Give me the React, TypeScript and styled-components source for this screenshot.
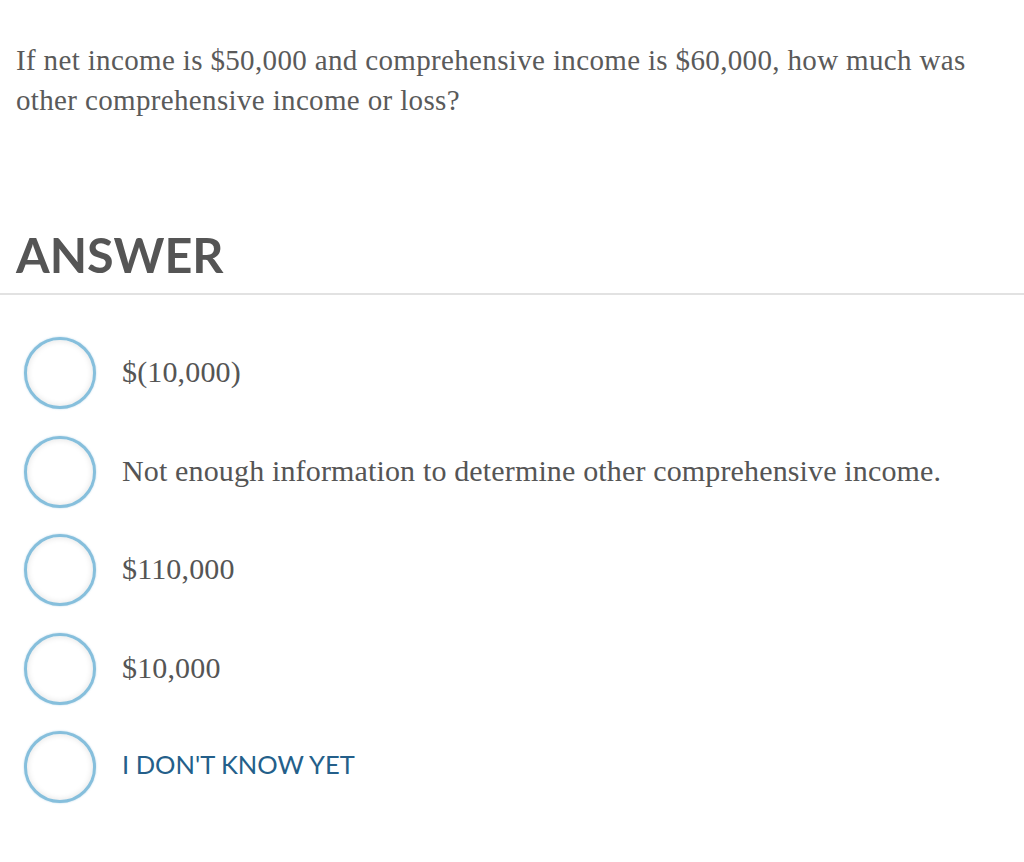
import React from 'react';
import styled, { createGlobalStyle } from 'styled-components';

const GlobalStyle = createGlobalStyle`
  body {
    margin: 0;
    background: #fff;
  }
`;

const Page = styled.div`
  width: 1024px;
  height: 862px;
  overflow: hidden;
  background: #fff;
`;

const Question = styled.p`
  margin: 0;
  padding: 40px 16px 0 16px;
  font-family: 'Liberation Serif', 'DejaVu Serif', serif;
  font-size: 29px;
  letter-spacing: 0.35px;
  line-height: 40px;
  color: #5a5a5a;
  white-space: nowrap;
`;

const Heading = styled.h2`
  margin: 105px 0 0 0;
  padding: 0 16px 10px 16px;
  font-family: Lato, 'Liberation Sans', sans-serif;
  font-weight: 700;
  font-size: 48.5px;
  line-height: 58px;
  color: #555;
  border-bottom: 2px solid #e2e2e2;
`;

const Options = styled.ul`
  list-style: none;
  margin: 0;
  padding: 42px 0 0 24px;
  display: flex;
  flex-direction: column;
  gap: 26.6px;
`;

const Option = styled.li`
  display: flex;
  align-items: center;
  gap: 26px;
  height: 72px;
`;

const Radio = styled.span`
  width: 66px;
  height: 66px;
  border-radius: 50%;
  border: 3px solid #86bfdc;
  background: #fff;
  box-shadow: inset 0 0 6px rgba(0, 0, 0, 0.12), 0 0 2px rgba(120, 180, 215, 0.6);
  flex-shrink: 0;
`;

const Label = styled.span<{ $unknown?: boolean }>`
  font-family: ${p => (p.$unknown ? "Lato, 'Liberation Sans', sans-serif" : "'Liberation Serif', 'DejaVu Serif', serif")};
  font-size: ${p => (p.$unknown ? '25.5px' : '30px')};
  letter-spacing: ${p => (p.$unknown ? '0' : '0.15px')};
  color: ${p => (p.$unknown ? '#245f8a' : '#555')};
  margin-top: ${p => (p.$unknown ? '-6px' : '-2px')};
`;

const answers = [
    { text: '$(10,000)' },
    { text: 'Not enough information to determine other comprehensive income.' },
    { text: '$110,000' },
    { text: '$10,000' },
    { text: "I DON'T KNOW YET", unknown: true },
];

export default function App() {
    return <>
        <GlobalStyle />
        <Page>
            <Question>
                If net income is $50,000 and comprehensive income is $60,000, how much was
                <br />
                other comprehensive income or loss?
            </Question>
            <Heading>ANSWER</Heading>
            <Options>
                {answers.map((a, i) => (
                    <Option key={i}>
                        <Radio />
                        <Label $unknown={a.unknown}>{a.text}</Label>
                    </Option>
                ))}
            </Options>
        </Page>
    </>;
}
